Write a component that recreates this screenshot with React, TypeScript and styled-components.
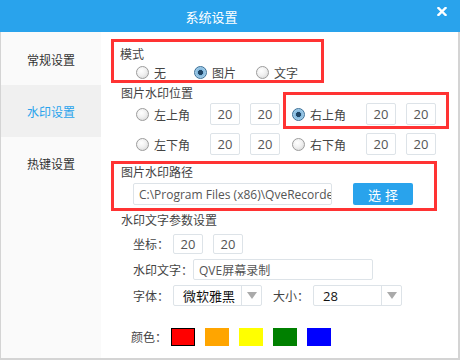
import * as React from "react";
import styled, { createGlobalStyle } from "styled-components";

const GlobalStyle = createGlobalStyle`
  html, body { margin: 0; padding: 0; background: #fff; }
  body { font-family: "Open Sans", "Noto Sans CJK SC", sans-serif; font-size: 12px; color: #444; }
`;

const Window = styled.div`
  width: 460px;
  height: 360px;
  display: flex;
  flex-direction: column;
  background: #fff;
  overflow: hidden;
`;

const TitleBar = styled.div`
  height: 32px;
  flex: none;
  background: #29a3ec;
  display: flex;
  align-items: center;
  color: #fff;
`;

const Title = styled.div`
  flex: 1;
  text-align: center;
  font-size: 13px;
  font-family: "Noto Sans CJK SC", sans-serif;
`;

const Close = styled.div`
  width: 37px;
  height: 32px;
  box-sizing: border-box;
  padding-top: 7px;
  display: flex;
  justify-content: center;
  align-items: flex-start;
`;

const Body = styled.div`
  flex: 1;
  display: flex;
  border: 1px solid #d4d4d4;
  border-top: none;
  border-right-width: 2px;
  border-bottom-width: 2px;
`;

const Sidebar = styled.div`
  width: 100px;
  flex: none;
  background: #fafafa;
  padding-top: 1px;
`;

const NavItem = styled.div<{ $active?: boolean }>`
  height: 52px;
  display: flex;
  align-items: center;
  padding-left: 26px;
  font-size: 12px;
  font-family: "Noto Sans CJK SC", sans-serif;
  color: ${(p) => (p.$active ? "#29a3ec" : "#333")};
  background: ${(p) => (p.$active ? "#f0f0f0" : "transparent")};
`;

const Content = styled.div`
  flex: 1;
  padding: 7px 0 0 10px;
`;

const ModeBox = styled.div`
  width: 213px;
  height: 44px;
  box-sizing: border-box;
  border: 3px solid #f33;
  padding: 4px 0 0 6px;
`;

const Text = styled.div`
  height: 16px;
  line-height: 16px;
  font-family: "Noto Sans CJK SC", sans-serif;
  color: #444;
  white-space: nowrap;
`;

const SectionLabel = styled(Text)<{ $top?: number }>`
  margin: ${(p) => p.$top ?? 0}px 0 0 10px;
`;

const ModeRow = styled.div`
  display: grid;
  grid-template-columns: 58px 62px auto;
  margin: 2px 0 0 16px;
  height: 16px;
`;

const RadioLabel = styled.label`
  display: flex;
  align-items: center;
  gap: 5px;
  font-family: "Noto Sans CJK SC", sans-serif;
  color: #444;
  white-space: nowrap;
`;

const Radio = styled.span<{ $checked?: boolean }>`
  width: 13px;
  height: 13px;
  flex: none;
  box-sizing: border-box;
  border-radius: 50%;
  border: 1px solid ${(p) => (p.$checked ? "#3a6f97" : "#9c9c9c")};
  background: ${(p) =>
    p.$checked
      ? "radial-gradient(circle at 50% 50%, #1f4566 0 2.4px, #7fb6dc 2.8px, #c6e3f5 100%)"
      : "radial-gradient(circle at 40% 35%, #ffffff 0%, #f1f1f1 45%, #d2d2d2 100%)"};
`;

const PosGrid = styled.div`
  display: grid;
  grid-template-columns: 144px 144px;
  column-gap: 12px;
  row-gap: 8px;
  margin: 2px 0 0 25px;
`;

const PosCell = styled.div<{ $highlight?: boolean }>`
  display: flex;
  align-items: center;
  gap: 10px;
  ${(p) =>
    p.$highlight &&
    `
    border: 3px solid #f33;
    padding: 8px 10px 1px 6px;
    margin: -11px -13px -4px -9px;
  `}
`;

const PosName = styled(RadioLabel)`
  width: 64px;
`;

const Field = styled.input<{ $w: number; $h?: number }>`
  width: ${(p) => p.$w}px;
  height: ${(p) => p.$h ?? 22}px;
  box-sizing: border-box;
  border: 1px solid #dde3e8;
  border-radius: 2px;
  padding: 0;
  margin: 0;
  font: inherit;
  font-size: 13px;
  color: #555;
  text-align: center;
  background: #fff;
  outline: none;
`;

const TextField = styled(Field)`
  text-align: left;
  padding-left: 5px;
  font-size: 12px;
  color: #555;
`;

const PathBox = styled.div`
  width: 326px;
  height: 50px;
  box-sizing: border-box;
  border: 3px solid #f33;
  margin-top: 6px;
  padding: 0 0 0 7px;
`;

const PathRow = styled.div`
  display: flex;
  align-items: center;
  gap: 21px;
  margin: 3px 0 0 12px;
`;

const Button = styled.div`
  width: 60px;
  height: 22px;
  background: #29a3ec;
  color: #fff;
  border-radius: 2px;
  display: flex;
  align-items: center;
  justify-content: center;
  font-family: "Noto Sans CJK SC", sans-serif;
  font-size: 13px;
  letter-spacing: 4px;
  text-indent: 4px;
`;

const ParamList = styled.div`
  display: flex;
  flex-direction: column;
  gap: 5px;
  margin: 5px 0 0 22px;
`;

const ParamRow = styled.div`
  display: flex;
  align-items: center;
  height: 21px;
`;

const ParamLabel = styled(Text)<{ $w: number }>`
  width: ${(p) => p.$w}px;
  flex: none;
`;

const Gap = styled.span<{ $w: number }>`
  width: ${(p) => p.$w}px;
  flex: none;
`;

const Select = styled.div<{ $w: number }>`
  width: ${(p) => p.$w}px;
  height: 21px;
  box-sizing: border-box;
  border: 1px solid #dde3e8;
  border-radius: 2px;
  display: flex;
  align-items: stretch;
  color: #111;
  font-size: 13px;
`;

const SelectValue = styled.div`
  flex: 1;
  display: flex;
  align-items: center;
  padding-left: 9px;
`;

const SelectArrow = styled.div`
  width: 19px;
  border-left: 1px solid #dde3e8;
  display: flex;
  align-items: center;
  justify-content: center;
  &::after {
    content: "";
    border-left: 5px solid transparent;
    border-right: 5px solid transparent;
    border-top: 7px solid #aaa;
  }
`;

const ColorRow = styled.div`
  display: flex;
  align-items: center;
  gap: 10px;
  margin: 22px 0 0 20px;
`;

const ColorLabel = styled(Text)`
  width: 30px;
`;

const Swatch = styled.div<{ $c: string; $selected?: boolean }>`
  width: 24px;
  height: 18px;
  box-sizing: border-box;
  background: ${(p) => p.$c};
  border: ${(p) => (p.$selected ? "1px solid #000" : "none")};
`;

const App = () => {
  const positions = [
    { name: "左上角", checked: false, hl: false },
    { name: "右上角", checked: true, hl: true },
    { name: "左下角", checked: false, hl: false },
    { name: "右下角", checked: false, hl: false },
  ];
  const colors = ["#ff0000", "#ffa500", "#ffff00", "#008000", "#0000ff"];

  return (
    <>
      <GlobalStyle />
      <Window>
        <TitleBar>
          <Title>系统设置</Title>
          <Close>
            <svg width="10" height="9" viewBox="0 0 10 9">
              <path d="M1.5 1 L8.5 8 M8.5 1 L1.5 8" stroke="#fff" strokeWidth="2.4" strokeLinecap="square" />
            </svg>
          </Close>
        </TitleBar>
        <Body>
          <Sidebar>
            <NavItem>常规设置</NavItem>
            <NavItem $active>水印设置</NavItem>
            <NavItem>热键设置</NavItem>
          </Sidebar>
          <Content>
            <ModeBox>
              <Text>模式</Text>
              <ModeRow>
                <RadioLabel><Radio />无</RadioLabel>
                <RadioLabel><Radio $checked />图片</RadioLabel>
                <RadioLabel><Radio />文字</RadioLabel>
              </ModeRow>
            </ModeBox>
            <SectionLabel $top={2}>图片水印位置</SectionLabel>
            <PosGrid>
              {positions.map((p) => (
                <PosCell key={p.name} $highlight={p.hl}>
                  <PosName><Radio $checked={p.checked} />{p.name}</PosName>
                  <Field $w={30} readOnly value="20" />
                  <Field $w={30} readOnly value="20" />
                </PosCell>
              ))}
            </PosGrid>
            <PathBox>
              <Text>图片水印路径</Text>
              <PathRow>
                <TextField $w={199} readOnly value="C:\Program Files (x86)\QveRecorder\watermark.png" />
                <Button>选择</Button>
              </PathRow>
            </PathBox>
            <SectionLabel $top={1}>水印文字参数设置</SectionLabel>
            <ParamList>
              <ParamRow>
                <ParamLabel $w={40}>坐标：</ParamLabel>
                <Field $w={30} $h={20} readOnly value="20" />
                <Gap $w={10} />
                <Field $w={30} $h={20} readOnly value="20" />
              </ParamRow>
              <ParamRow>
                <ParamLabel $w={60}>水印文字：</ParamLabel>
                <TextField $w={180} $h={21} readOnly value="QVE屏幕录制" />
              </ParamRow>
              <ParamRow>
                <ParamLabel $w={40}>字体：</ParamLabel>
                <Select $w={89}>
                  <SelectValue>微软雅黑</SelectValue>
                  <SelectArrow />
                </Select>
                <Gap $w={11} />
                <ParamLabel $w={40}>大小：</ParamLabel>
                <Select $w={89}>
                  <SelectValue>28</SelectValue>
                  <SelectArrow />
                </Select>
              </ParamRow>
            </ParamList>
            <ColorRow>
              <ColorLabel>颜色：</ColorLabel>
              {colors.map((c, i) => (
                <Swatch key={c} $c={c} $selected={i === 0} />
              ))}
            </ColorRow>
          </Content>
        </Body>
      </Window>
    </>
  );
};

export default App;
